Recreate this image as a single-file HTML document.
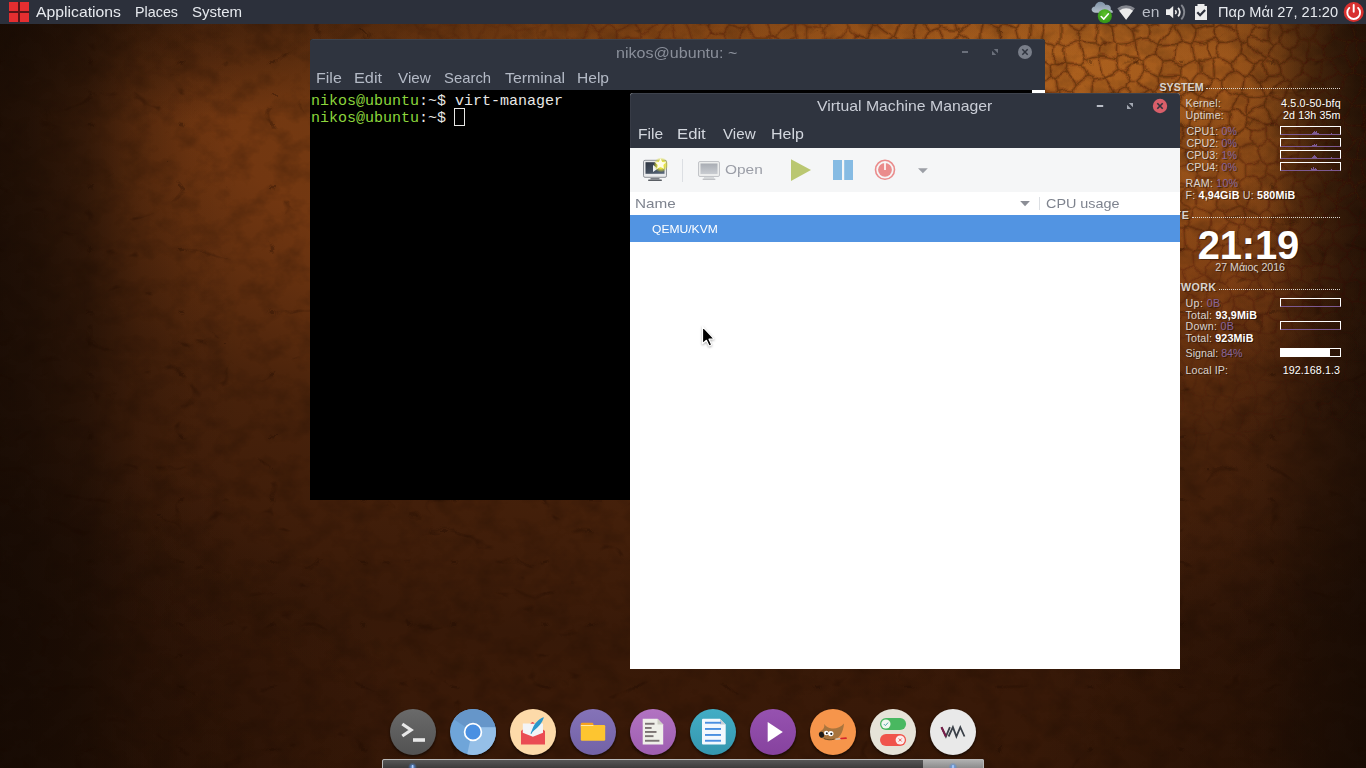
<!DOCTYPE html>
<html lang="en"><head><meta charset="utf-8"><title>Desktop</title>
<style>
html,body{margin:0;padding:0}
body{width:1366px;height:768px;overflow:hidden;position:relative;background:#3a1a08;font-family:"Liberation Sans",sans-serif}
.a{position:absolute}
.t{position:absolute;white-space:pre;line-height:20px;height:20px;transform-origin:0 0}
#wall{position:absolute;left:0;top:0;width:1366px;height:768px;
background:
 linear-gradient(to right, rgba(20,10,4,.82) 0px, rgba(20,10,4,.77) 30px, rgba(20,10,4,.59) 85px, rgba(20,10,4,.22) 140px, rgba(20,10,4,.06) 190px, rgba(20,10,4,0) 240px),
 radial-gradient(ellipse 125px 420px at 1376px 60px, rgba(20,10,4,.5) 0%, rgba(20,10,4,.4) 28%, rgba(20,10,4,.2) 58%, rgba(20,10,4,.05) 84%, rgba(20,10,4,0) 100%),
 linear-gradient(to left, rgba(20,10,4,.7) 0px, rgba(20,10,4,.66) 10px, rgba(20,10,4,.41) 60px, rgba(20,10,4,.12) 100px, rgba(20,10,4,0) 140px),
 radial-gradient(ellipse 430px 112px at 120px 10px, rgba(20,10,4,.45) 0%, rgba(20,10,4,.3) 50%, rgba(20,10,4,0) 100%),
 linear-gradient(to bottom, rgba(20,10,4,.1) 24px, rgba(20,10,4,0) 60px),
 radial-gradient(ellipse 420px 330px at 0px 768px, rgba(12,5,1,.3) 0%, rgba(12,5,1,.3) 45%, rgba(12,5,1,0) 100%),
 radial-gradient(ellipse 330px 300px at 1366px 768px, rgba(12,5,1,.4) 0%, rgba(12,5,1,.25) 50%, rgba(12,5,1,0) 100%),
 radial-gradient(ellipse 900px 520px at 640px 330px, rgba(12,5,1,0) 0%, rgba(12,5,1,0) 62%, rgba(12,5,1,.1) 100%),
 radial-gradient(ellipse 590px 360px at 1095px 20px, rgba(214,124,40,.66) 0%, rgba(205,116,36,.46) 38%, rgba(190,105,32,.2) 70%, rgba(180,100,30,0) 100%),
 radial-gradient(ellipse 1500px 640px at 840px 60px, #7e4214 0%, #763d12 19%, #723711 43%, #48220b 64%, #3d1c09 84%, #371908 92%, #3a1a08 100%);
}
#panel{left:0;top:0;width:1366px;height:24px;background:#2c303b}
.gb{position:absolute;box-sizing:border-box;border:1px solid #fff;border-bottom-color:#7d5a92;height:9px;left:1280px;width:61px}
.dots{position:absolute;height:0;border-top:1px dotted #d8d4cf}
</style></head><body>
<div id="wall"></div>

<svg class="a" style="left:0;top:0" width="1366" height="768">
<defs>
<filter id="lea" x="0" y="0" width="100%" height="100%" color-interpolation-filters="sRGB">
 <feTurbulence type="fractalNoise" baseFrequency=".04 .05" numOctaves="4" seed="7" result="n"/>
 <feColorMatrix in="n" type="matrix" values="0 0 0 0 .08  0 0 0 0 .03  0 0 0 0 0  1.7 0 0 0 -.720"/>
</filter>
<filter id="crk" x="0" y="0" width="100%" height="100%" color-interpolation-filters="sRGB">
 <feTurbulence type="turbulence" baseFrequency=".05 .06" numOctaves="2" seed="11" result="t"/>
 <feColorMatrix in="t" type="matrix" values="0 0 0 0 .200  0 0 0 0 .070  0 0 0 0 0  -7 0 0 0 1.25"/>
</filter>
<filter id="wr" x="0" y="0" width="100%" height="100%" color-interpolation-filters="sRGB">
 <feTurbulence type="turbulence" baseFrequency=".011 .016" numOctaves="3" seed="23" result="t"/>
 <feColorMatrix in="t" type="matrix" values="0 0 0 0 .100  0 0 0 0 .030  0 0 0 0 0  -16 0 0 0 1.3"/>
</filter>
<radialGradient id="crm" cx="1080" cy="40" r="440" gradientUnits="userSpaceOnUse" gradientTransform="translate(0 15) scale(1 .62)"><stop offset="0" stop-color="#fff"/><stop offset=".6" stop-color="#fff" stop-opacity=".75"/><stop offset="1" stop-color="#fff" stop-opacity="0"/></radialGradient>
<mask id="cm"><rect width="1366" height="768" fill="url(#crm)"/></mask>
</defs>
<rect width="1366" height="768" filter="url(#lea)" opacity=".3"/>
<rect width="1366" height="768" filter="url(#wr)" opacity=".28"/>
</svg><svg class="a" style="left:0;top:0" width="1366" height="480" viewBox="0 0 1366 480"><defs>
<path id="ck0" d="M1313 40Q1319 42 1325 46M1313 40Q1315 33 1318 27M1308 41Q1308 51 1307 61M1308 41Q1311 41 1313 40M1230 143Q1231 144 1232 142M1238 95Q1239 94 1241 94M1238 95Q1230 92 1223 89M1241 94Q1244 85 1244 77M1223 89Q1221 86 1222 82M1222 82Q1227 76 1233 70M1244 77Q1239 72 1233 70M1308 41Q1305 39 1301 39M1301 39Q1296 45 1290 49M1290 49Q1293 52 1292 56M1307 61Q1305 63 1303 65M1303 65Q1298 60 1292 56M1303 65Q1301 68 1302 72M948 44Q944 43 943 40M928 44Q935 42 943 40M1232 111Q1240 112 1248 115M1232 111Q1230 110 1229 112M1235 134Q1233 128 1229 124M1235 134Q1241 132 1245 128M1245 128Q1247 122 1248 116M1229 112Q1230 118 1229 124M1269 26Q1262 26 1255 27M1269 26Q1270 34 1269 41M1255 27Q1253 32 1252 37M1252 37Q1260 40 1269 41M1235 134Q1234 138 1232 142M1230 143Q1223 141 1216 139M1229 124Q1221 127 1213 130M1216 139Q1216 134 1213 130M1190 125Q1187 128 1183 128M1190 125Q1193 125 1195 127M1195 127Q1199 137 1200 148M1180 147Q1181 137 1183 128M1180 147Q1184 150 1188 152M1188 152Q1194 151 1200 148M1216 139Q1212 146 1206 150M1213 130Q1210 128 1209 126M1195 127Q1202 127 1209 126M1206 150Q1204 147 1200 148M1196 110Q1197 102 1199 95M1196 110Q1205 110 1214 114M1199 95Q1208 97 1215 101M1215 101Q1219 104 1218 109M1218 109Q1216 111 1214 114M1190 125Q1192 121 1191 116M1191 116Q1194 114 1196 110M1209 126Q1211 119 1214 114M1214 79Q1218 81 1222 82M1223 89Q1217 94 1215 101M1213 80Q1206 88 1199 95M1232 111Q1236 104 1238 95M1229 112Q1224 111 1218 109M1213 80Q1205 78 1200 73M1200 73Q1195 80 1191 86M1199 95Q1195 93 1191 90M1191 86Q1192 88 1191 90M1183 42Q1179 34 1174 27M1183 42Q1179 43 1177 46M1177 46Q1167 45 1157 46M1173 26Q1164 35 1157 46M1197 29Q1197 36 1194 41M1197 29Q1193 26 1191 20M1192 44Q1194 44 1194 41M1192 44Q1187 42 1183 42M1191 20Q1183 23 1174 27M1160 76Q1163 69 1163 62M1160 76Q1170 76 1180 75M1163 62Q1169 62 1174 61M1174 61Q1178 63 1181 66M1180 75Q1179 70 1181 66M1157 54Q1156 50 1157 46M1157 54Q1160 58 1163 62M1177 46Q1174 53 1174 61M1192 44Q1193 51 1195 59M1195 59Q1188 62 1181 66M1199 61Q1196 62 1195 59M1199 61Q1201 67 1200 73M1180 76Q1187 80 1191 86M1206 41Q1207 51 1211 59M1206 41Q1211 39 1216 38M1216 38Q1217 41 1220 42M1220 42Q1217 50 1218 58M1218 58Q1214 57 1212 59M1194 41Q1200 44 1206 41M1199 61Q1205 62 1211 59M1197 29Q1204 25 1213 25M1213 25Q1214 26 1215 27M1215 27Q1215 32 1216 38M1220 25Q1218 27 1215 27M1220 25Q1228 26 1235 30M1237 40Q1235 35 1235 30M1237 40Q1229 43 1220 42M1242 43Q1239 43 1237 40M1242 43Q1241 47 1240 52M1240 52Q1238 59 1231 65M1231 65Q1224 62 1218 58M1214 79Q1215 69 1212 59M1231 65Q1232 68 1233 70M1210 10Q1211 17 1213 25M1220 25Q1226 20 1230 14M1235 30Q1235 23 1239 17M1242 43Q1245 42 1247 41M1252 22Q1252 25 1255 27M1247 41Q1248 38 1252 37M894 37Q884 32 877 25M894 37Q898 29 900 19M877 25Q883 17 890 9M1275 20Q1280 25 1283 31M1283 31Q1290 30 1297 30M1297 30Q1298 26 1299 22M1269 26Q1271 22 1275 20M1279 44Q1281 38 1283 31M1279 44Q1276 45 1274 46M1274 46Q1271 44 1269 41M1301 39Q1299 35 1297 30M1290 49Q1284 48 1279 44M1318 27Q1310 24 1305 17M1241 94Q1244 96 1248 97M1248 97Q1249 106 1248 115M1292 56Q1286 62 1279 66M1274 46Q1269 51 1269 57M1279 66Q1275 60 1269 57M1247 41Q1255 51 1265 58M1269 57Q1266 55 1265 58M1245 128Q1249 129 1251 132M1248 116Q1257 121 1267 125M1081 8Q1083 17 1086 25M1086 25Q1092 23 1098 24M1098 24Q1099 22 1101 23M1158 24Q1153 24 1150 27M1150 27Q1147 25 1145 21M1173 26Q1173 23 1170 22M1157 46Q1154 41 1149 38M1150 27Q1150 32 1149 38M1121 20Q1126 25 1131 30M1121 20Q1118 25 1112 27M1112 27Q1113 34 1114 41M1134 41Q1135 35 1131 30M1134 41Q1126 45 1118 44M1118 44Q1115 43 1114 41M1145 21Q1139 27 1131 30M1101 23Q1107 23 1112 27M1095 42Q1097 45 1100 47M1095 42Q1097 33 1098 24M1100 47Q1107 43 1114 41M1149 38Q1141 38 1134 41M1020 21Q1019 25 1016 28M1016 28Q1010 25 1003 25M1003 25Q1003 16 1007 8M1028 41Q1031 31 1030 20M1020 42Q1018 35 1016 28M999 28Q999 36 1000 44M999 28Q1000 25 1003 25M985 22Q993 25 999 28M983 23Q980 33 981 44M960 33Q967 38 972 45M960 32Q967 27 970 20M1183 128Q1178 125 1171 125M1118 57Q1117 57 1117 59M1118 57Q1127 55 1137 57M1117 59Q1116 64 1118 69M1137 57Q1138 57 1138 59M1138 59Q1132 67 1125 73M1118 69Q1121 72 1125 73M1098 56Q1100 51 1100 47M1099 56Q1108 56 1117 59M1118 44Q1117 50 1118 57M1134 41Q1137 49 1137 57M1104 77Q1112 75 1118 69M1104 77Q1100 67 1099 56M1157 54Q1149 56 1143 61M1143 61Q1140 61 1138 59M1178 103Q1180 100 1181 97M1168 108Q1166 98 1164 88M1181 97Q1175 93 1170 89M1164 88Q1167 88 1170 89M1191 116Q1186 109 1178 103M1191 90Q1186 93 1181 97M1180 76Q1174 82 1170 89M1147 91Q1150 90 1151 92M1147 91Q1141 86 1137 79M1151 92Q1156 90 1159 85M1144 71Q1141 76 1137 79M1144 71Q1152 75 1159 77M1159 77Q1160 81 1159 85M1135 97Q1142 94 1147 91M1153 105Q1154 98 1151 92M1126 87Q1132 91 1135 97M1126 87Q1126 83 1129 79M1129 79Q1133 81 1137 79M1164 88Q1162 87 1159 85M1129 79Q1128 76 1125 73M1143 61Q1143 66 1144 71M1248 115Q1255 108 1265 105M1265 105Q1269 113 1273 121M1248 97Q1256 98 1264 95M1265 105Q1267 101 1266 96M1264 95Q1264 97 1266 96M1302 72Q1297 77 1291 81M1291 81Q1288 79 1284 79M1279 66Q1282 70 1280 75M1284 79Q1283 76 1280 75M1291 81Q1290 83 1292 84M1292 84Q1286 91 1282 100M1282 100Q1275 98 1268 96M1284 79Q1275 87 1268 96M1288 108Q1286 103 1282 100M1292 84Q1296 92 1302 97M894 37Q885 42 876 47M894 37Q897 39 899 42M877 25Q875 26 873 25M867 38Q869 31 873 25M867 38Q867 42 870 46M915 23Q915 31 914 39M919 20Q926 25 930 32M917 40Q915 40 914 39M925 41Q927 36 930 32M899 42Q906 40 914 39M943 40Q941 34 938 28M938 28Q934 29 930 32M1098 56Q1091 56 1085 59M1095 42Q1087 42 1078 41M1078 41Q1081 50 1085 59M1079 30Q1077 35 1078 41M1079 30Q1083 28 1086 25M1041 43Q1048 42 1055 45M1041 43Q1043 33 1045 24M1060 23Q1060 33 1060 44M1060 44Q1057 42 1055 45M957 29Q953 21 951 13M957 29Q948 30 940 26M940 26Q940 21 938 17M960 32Q960 29 957 29M948 44Q955 40 960 33M938 28Q940 28 940 26M1188 152Q1186 158 1188 164M1098 100Q1106 97 1114 93M1114 93Q1115 94 1116 94M1126 87Q1120 89 1116 94M1104 77Q1110 84 1114 93M1066 72Q1068 68 1068 64M1066 72Q1061 76 1056 79M1067 63Q1067 64 1068 64M1067 63Q1060 64 1053 63M1053 63Q1050 64 1048 66M1048 66Q1050 71 1051 75M1051 75Q1054 77 1056 79M1065 46Q1071 43 1078 41M1065 46Q1064 54 1067 63M1085 59Q1085 62 1082 64M1082 64Q1075 65 1068 64M1065 46Q1062 45 1060 44M1055 45Q1054 54 1053 63M1039 62Q1044 63 1048 66M1040 82Q1046 81 1051 75M867 38Q862 39 857 36M873 25Q871 21 867 18M1260 83Q1264 80 1267 76M1260 83Q1254 80 1249 76M1267 76Q1265 68 1262 61M1249 76Q1252 70 1257 64M1257 64Q1259 61 1262 61M1264 95Q1263 88 1260 83M1280 75Q1274 77 1267 76M1244 77Q1247 78 1249 76M1265 58Q1264 60 1262 61M1240 52Q1248 58 1257 64M1079 30Q1071 27 1065 21M1093 97Q1092 88 1095 80M1079 100Q1075 96 1073 90M1076 85Q1081 80 1088 77M1076 85Q1074 87 1073 90M1095 80Q1091 78 1088 77M1104 77Q1100 79 1095 80M1082 64Q1086 70 1088 77M1066 72Q1072 78 1076 85M1049 92Q1048 99 1045 105M1049 92Q1054 93 1058 91M1059 91Q1058 97 1059 104M1041 90Q1045 89 1049 92M1056 79Q1057 85 1058 91M1073 90Q1066 89 1059 91"/>
<path id="ck1" d="M1344 54Q1345 47 1348 41M1344 54Q1337 57 1329 60M1348 41Q1341 41 1334 38M1334 38Q1331 43 1325 46M1325 46Q1324 52 1326 59M1329 60Q1328 59 1326 59M1347 21Q1339 25 1331 25M1347 21Q1350 24 1353 26M1331 25Q1333 31 1334 38M1348 41Q1351 42 1353 39M1353 39Q1354 32 1353 26M1331 25Q1328 25 1327 22M1318 27Q1322 23 1327 22M1354 68Q1348 61 1344 54M1354 68Q1356 71 1354 73M1354 73Q1349 74 1344 77M1329 60Q1333 67 1338 74M1344 77Q1340 77 1338 74M1326 59Q1326 61 1324 60M1307 61Q1316 59 1324 60M1361 57Q1357 49 1356 40M1361 57Q1368 57 1375 57M1356 40Q1363 42 1371 40M1354 68Q1357 62 1361 57M1353 39Q1354 41 1356 40M1353 26Q1357 23 1360 20M1309 216Q1312 220 1312 224M1309 216Q1307 214 1304 213M1304 213Q1296 214 1290 216M1290 216Q1291 223 1290 230M1304 213Q1301 205 1300 197M1290 216Q1289 214 1287 214M1300 197Q1296 195 1292 192M1292 192Q1288 194 1284 197M1287 214Q1285 205 1284 197M1289 174Q1285 166 1278 161M1289 174Q1291 175 1293 176M1278 161Q1288 158 1297 157M1297 157Q1300 160 1300 164M1293 176Q1296 170 1300 164M1240 149Q1239 154 1240 158M1240 149Q1237 145 1232 142M1230 143Q1223 152 1218 163M1240 158Q1234 162 1227 166M1227 166Q1224 166 1221 166M1221 166Q1221 163 1218 163M1354 73Q1357 75 1361 77M1361 77Q1366 78 1370 75M1361 77Q1363 82 1362 87M1340 95Q1343 86 1344 77M1340 95Q1346 99 1351 103M1362 87Q1358 96 1351 103M1324 60Q1320 69 1318 80M1302 72Q1309 75 1314 80M1318 80Q1316 78 1314 80M1338 74Q1329 77 1321 82M1318 80Q1320 80 1321 82M1277 160Q1279 153 1279 147M1297 157Q1297 153 1299 149M1279 147Q1280 145 1281 145M1299 149Q1290 147 1281 145M1361 161Q1364 171 1367 180M1361 161Q1366 159 1371 157M1227 166Q1231 173 1235 179M1221 166Q1219 172 1217 179M1235 179Q1228 183 1220 186M1217 179Q1217 183 1220 186M1218 163Q1214 160 1210 160M1210 160Q1207 156 1206 150M1235 179Q1238 178 1240 181M1240 181Q1239 184 1240 188M1240 188Q1235 191 1231 195M1220 186Q1219 189 1219 193M1219 193Q1218 195 1220 195M1220 195Q1226 196 1231 195M1245 208Q1242 206 1239 206M1246 208Q1249 203 1251 198M1240 188Q1247 191 1251 198M1231 195Q1235 201 1239 206M728 45Q725 39 723 34M729 24Q726 29 723 34M729 24Q737 25 744 28M744 28Q741 35 738 43M1309 216Q1316 212 1318 205M1318 205Q1322 210 1326 215M1338 206Q1339 209 1336 211M1245 208Q1245 216 1242 223M1242 223Q1249 225 1255 229M1259 216Q1252 211 1246 208M1259 216Q1258 221 1260 227M1260 227Q1257 229 1255 229M1362 87Q1369 91 1373 97M1251 132Q1259 131 1266 128M1251 132Q1250 138 1253 144M1258 146Q1256 144 1253 144M1258 146Q1262 143 1267 140M1267 140Q1266 134 1266 128M1267 125Q1266 127 1266 128M1240 149Q1246 145 1253 144M1340 95Q1337 95 1333 97M1321 82Q1324 85 1324 89M1333 97Q1329 93 1324 89M1240 158Q1243 161 1246 164M1258 146Q1259 153 1262 160M1246 164Q1254 164 1262 160M1240 181Q1244 179 1246 176M1246 164Q1245 170 1246 176M1277 160Q1273 163 1268 164M1279 147Q1274 142 1267 140M1262 160Q1265 162 1268 164M1357 161Q1354 159 1351 160M1357 161Q1358 150 1362 139M1351 160Q1347 158 1344 156M1344 156Q1343 154 1344 153M1344 153Q1348 146 1353 142M1353 142Q1357 139 1362 139M1373 150Q1368 144 1365 138M1368 129Q1365 133 1365 138M1361 161Q1360 160 1357 161M1365 138Q1363 138 1362 139M1295 181Q1300 181 1304 180M1295 181Q1294 179 1293 176M1300 164Q1309 165 1317 166M1317 166Q1318 169 1316 173M1304 180Q1310 176 1316 173M1300 197Q1308 196 1317 195M1292 192Q1292 186 1295 181M1304 180Q1309 189 1317 195M1318 205Q1319 200 1322 196M1322 196Q1319 196 1317 195M1367 180Q1362 184 1355 186M1351 160Q1349 171 1348 181M1348 181Q1351 185 1355 186M1358 198Q1358 194 1355 191M1355 186Q1357 188 1355 191M1338 206Q1338 203 1336 202M1355 191Q1346 197 1336 202M1344 156Q1338 158 1333 163M1344 153Q1337 146 1332 138M1333 163Q1327 163 1321 162M1332 138Q1331 140 1328 140M1328 140Q1326 151 1321 162M1332 138Q1332 135 1333 132M1344 125Q1348 134 1353 142M1333 132Q1339 128 1344 124M1351 104Q1347 112 1344 120M1333 97Q1329 102 1326 108M1344 120Q1334 114 1326 108M1217 179Q1209 178 1201 178M1219 193Q1214 192 1208 191M1208 191Q1204 185 1201 178M1197 207Q1203 211 1211 212M1197 207Q1195 202 1197 198M1220 195Q1217 202 1217 209M1197 198Q1203 195 1208 191M1211 212Q1214 211 1217 209M1239 206Q1231 208 1225 213M1217 209Q1221 210 1225 213M1242 223Q1240 224 1238 225M1238 225Q1234 226 1231 223M1225 213Q1228 218 1231 223M749 49Q754 45 756 38M746 27Q751 33 756 38M729 24Q726 18 725 11M746 27Q749 25 749 22M756 38Q763 39 770 38M770 38Q770 47 767 55M1243 247Q1248 246 1250 241M1238 225Q1238 235 1236 244M1236 244Q1238 247 1243 247M1255 229Q1254 236 1250 241M1264 246Q1265 238 1266 229M1280 235Q1275 232 1271 229M1271 229Q1269 230 1266 229M1260 227Q1264 227 1266 229M1275 218Q1281 216 1287 214M1275 218Q1271 223 1271 229M1275 218Q1273 212 1267 209M1267 209Q1262 211 1259 216M1236 244Q1230 243 1224 245M1224 245Q1224 243 1222 244M1231 223Q1224 228 1217 234M1222 244Q1218 240 1217 234M1211 212Q1212 221 1210 229M1217 234Q1214 232 1210 229M1197 207Q1194 207 1193 209M1203 232Q1207 232 1210 229M1203 232Q1196 228 1188 226M1193 209Q1191 218 1188 226M1361 107Q1367 106 1371 104M1361 107Q1363 117 1366 127M1351 104Q1356 107 1361 107M1344 125Q1355 124 1366 127M1344 120Q1345 122 1344 124M1267 125Q1271 124 1273 121M1286 131Q1286 138 1281 145M1286 131Q1279 127 1275 121M1275 121Q1274 123 1273 121M1275 121Q1283 116 1288 108M1306 97Q1309 97 1312 99M1306 97Q1304 98 1302 97M1302 97Q1299 103 1296 108M1312 99Q1315 106 1321 110M1297 110Q1306 110 1315 115M1315 115Q1317 113 1320 113M1321 110Q1320 111 1320 113M1314 80Q1308 87 1306 97M1324 89Q1317 93 1312 99M1288 108Q1292 108 1296 108M1326 108Q1323 107 1321 110M1298 129Q1292 129 1286 131M1298 129Q1298 119 1297 110M1333 132Q1328 130 1325 125M1325 125Q1322 119 1320 113M1266 174Q1264 179 1259 180M1266 174Q1271 177 1275 181M1259 180Q1262 187 1260 194M1275 181Q1275 189 1280 196M1260 194Q1265 196 1269 199M1280 196Q1275 199 1269 199M1246 176Q1253 178 1259 180M1268 164Q1268 170 1266 174M1289 174Q1281 176 1275 181M1251 198Q1255 197 1260 194M1284 197Q1281 199 1280 196M1267 209Q1270 205 1269 199M1336 179Q1329 180 1324 186M1336 179Q1340 180 1345 182M1345 182Q1339 191 1335 201M1324 186Q1323 191 1322 196M1322 196Q1329 196 1335 201M1333 163Q1335 171 1336 179M1317 166Q1317 163 1320 163M1316 173Q1321 179 1324 186M1348 181Q1347 183 1345 182M1311 149Q1314 145 1316 141M1311 149Q1306 148 1300 148M1316 141Q1313 136 1310 131M1300 148Q1298 139 1299 129M1310 131Q1309 129 1306 129M1299 129Q1303 130 1306 129M1328 140Q1322 139 1316 141M1320 163Q1316 155 1311 149M1325 125Q1318 129 1310 131M1315 115Q1310 121 1306 129M1178 183Q1183 184 1189 185M1189 185Q1194 181 1197 176M1176 168Q1183 167 1188 164M1188 164Q1193 168 1197 173M1197 173Q1198 174 1197 176M1197 198Q1194 191 1189 185M1201 178Q1200 176 1197 176M1210 160Q1205 167 1197 173M766 22Q769 29 771 37M775 37Q773 37 771 37M775 37Q780 39 782 42M857 36Q852 32 848 27M857 36Q853 42 850 49M848 27Q843 35 837 41M816 46Q820 41 824 37M824 37Q830 41 837 41M723 34Q716 34 709 31M714 9Q712 19 708 27M1180 201Q1176 198 1171 200M1180 201Q1185 206 1191 209M1191 209Q1183 211 1175 213M1189 185Q1183 192 1180 201M1184 228Q1180 228 1176 227M1184 228Q1184 239 1186 249M1179 251Q1182 248 1186 249M1188 226Q1185 226 1184 228M1205 251Q1201 251 1197 250M1193 251Q1196 251 1197 250M1186 249Q1190 250 1193 251M1222 244Q1213 246 1205 251M1203 232Q1199 240 1197 250M775 37Q783 31 789 24M789 24Q792 26 795 24M782 42Q790 42 796 39M795 24Q795 32 796 39M796 39Q798 41 799 43M818 11Q819 19 818 28M818 28Q813 26 807 26M807 26Q804 22 799 22M824 37Q825 34 822 32M822 32Q822 28 818 28M807 42Q806 34 807 26M795 24Q797 24 799 22M848 27Q847 26 848 24M822 32Q826 25 833 20"/>
<path id="ck2" d="M1364 267Q1369 267 1373 270M1364 267Q1362 259 1362 251M1362 251Q1369 248 1375 247M1377 224Q1370 224 1363 226M1375 247Q1371 235 1363 226M1312 224Q1307 230 1301 235M1290 230Q1297 231 1301 235M1315 264Q1309 267 1302 269M1315 264Q1309 255 1301 248M1287 265Q1295 265 1302 269M1287 265Q1292 258 1296 251M1296 251Q1298 248 1301 248M1378 291Q1373 298 1365 303M1364 267Q1361 269 1357 269M1357 269Q1352 273 1350 279M1372 283Q1367 281 1362 284M1350 279Q1357 280 1362 284M1365 303Q1361 303 1358 301M1362 284Q1360 293 1358 301M1233 347Q1233 336 1232 325M1248 334Q1246 329 1243 325M1232 325Q1237 324 1243 325M1365 208Q1374 208 1382 210M1365 208Q1365 205 1364 203M1364 203Q1371 196 1378 190M1359 222Q1354 214 1346 207M1359 222Q1361 215 1365 208M1364 203Q1362 199 1358 198M1346 207Q1351 201 1358 198M580 41Q573 41 567 39M580 41Q584 34 589 26M587 22Q590 24 589 26M629 23Q625 28 618 30M618 30Q613 27 608 23M589 26Q594 30 600 32M608 23Q603 26 600 32M663 18Q652 28 640 34M635 24Q637 29 640 34M635 24Q640 17 645 8M640 39Q639 37 640 34M640 39Q642 41 642 43M642 43Q651 42 658 38M667 23Q663 30 658 38M640 39Q629 39 617 40M629 23Q632 22 635 24M618 30Q616 34 617 40M658 38Q662 39 663 42M672 24Q675 31 675 40M663 42Q669 40 675 40M1312 224Q1317 224 1321 227M1326 215Q1325 222 1321 227M1314 243Q1321 237 1324 229M1314 243Q1308 245 1302 243M1301 235Q1303 239 1302 243M1321 227Q1323 228 1324 229M1352 247Q1357 236 1360 225M1352 247Q1350 249 1347 250M1347 250Q1341 246 1335 242M1359 224Q1349 225 1339 227M1339 227Q1337 231 1333 233M1335 242Q1332 238 1333 233M1362 251Q1357 250 1352 247M1363 226Q1361 226 1360 225M1357 269Q1352 262 1346 256M1346 256Q1349 253 1347 250M1346 207Q1342 208 1338 206M1336 211Q1337 219 1339 227M1326 215Q1331 212 1336 211M1324 229Q1329 231 1333 233M1325 251Q1330 247 1335 242M1325 251Q1319 248 1314 243M1358 301Q1355 301 1353 302M1346 281Q1340 275 1337 267M1346 282Q1333 278 1319 277M1337 267Q1329 265 1320 265M1319 277Q1321 271 1320 265M1346 256Q1341 261 1337 267M1350 279Q1349 282 1346 281M1325 251Q1323 258 1320 265M1315 264Q1318 263 1320 265M1302 243Q1301 245 1301 248M1205 350Q1198 343 1193 334M1193 334Q1200 331 1206 326M1215 340Q1217 335 1215 330M1215 330Q1210 328 1206 326M1177 345Q1180 342 1180 338M1180 338Q1176 333 1173 327M1193 334Q1191 336 1190 334M1180 338Q1185 336 1190 334M1322 316Q1317 319 1313 324M1302 269Q1302 274 1301 279M1318 282Q1315 283 1313 284M1318 282Q1319 279 1319 277M1301 279Q1307 282 1313 284M1245 256Q1246 251 1243 247M1245 256Q1251 259 1257 258M1257 258Q1260 252 1264 246M1264 246Q1258 242 1250 241M1256 279Q1261 274 1267 269M1267 269Q1261 264 1257 258M1255 279Q1250 269 1243 261M1243 261Q1245 259 1245 256M1274 250Q1269 249 1264 246M1274 250Q1278 247 1280 243M1280 243Q1281 239 1280 235M1277 264Q1273 267 1268 269M1277 264Q1277 257 1274 250M1296 251Q1288 247 1280 243M1286 266Q1281 266 1277 264M1290 230Q1285 232 1280 235M1172 266Q1177 268 1183 270M1186 287Q1188 287 1187 285M1186 287Q1178 287 1169 285M1183 270Q1186 277 1187 285M709 31Q710 29 708 27M709 31Q707 37 702 40M708 27Q701 25 695 21M692 38Q690 30 686 23M692 38Q695 39 697 42M676 41Q684 38 692 38M1232 325Q1231 323 1229 323M1243 325Q1246 321 1249 316M1249 316Q1242 311 1235 306M1229 323Q1230 314 1235 306M1215 330Q1220 328 1222 323M1229 323Q1225 324 1222 323M1186 287Q1186 292 1189 295M1168 296Q1175 298 1181 302M1189 295Q1186 300 1181 302M1190 334Q1191 325 1189 317M1173 327Q1177 321 1181 315M1189 317Q1185 315 1181 315M1323 313Q1319 310 1319 305M1323 313Q1329 312 1336 312M1319 305Q1322 299 1325 292M1336 312Q1340 305 1344 297M1325 292Q1334 292 1342 294M1344 297Q1341 296 1342 294M1322 316Q1322 314 1323 313M1353 302Q1349 299 1344 297M1318 282Q1323 286 1325 292M1346 282Q1342 287 1342 294M1313 324Q1305 321 1299 317M1319 305Q1312 302 1304 302M1299 317Q1303 310 1304 302M1292 328Q1290 325 1291 321M1299 317Q1295 319 1291 321M1313 284Q1307 290 1301 297M1304 302Q1303 300 1301 297M1289 279Q1282 282 1275 283M1289 279Q1292 280 1292 284M1292 284Q1292 288 1292 293M1292 293Q1288 297 1283 298M1283 298Q1279 297 1275 297M1275 283Q1274 290 1274 296M1286 266Q1288 272 1289 279M1268 269Q1271 277 1275 283M1301 279Q1296 281 1292 284M1301 297Q1297 294 1292 293M1289 320Q1290 320 1291 321M1289 320Q1288 308 1283 298M1267 315Q1271 319 1277 320M1267 315Q1270 306 1275 297M1277 320Q1283 319 1289 320M1256 279Q1260 286 1264 293M1264 293Q1269 295 1274 296M1261 316Q1264 316 1267 315M1261 316Q1258 317 1256 314M1264 293Q1260 298 1254 301M1256 314Q1253 308 1254 301M1277 320Q1276 327 1274 333M1261 316Q1262 325 1260 333M1248 334Q1254 332 1259 334M1249 316Q1253 315 1256 314M1224 245Q1222 252 1223 260M1243 261Q1240 262 1238 265M1224 262Q1231 264 1238 265M1204 274Q1205 267 1210 261M1203 274Q1197 271 1194 265M1194 265Q1193 258 1193 251M1210 261Q1207 256 1205 251M1212 281Q1208 278 1204 274M1212 281Q1215 282 1218 280M1223 260Q1216 260 1210 261M1224 262Q1222 271 1218 280M1183 270Q1189 269 1194 265M1187 285Q1194 278 1203 274M602 38Q606 43 612 46M602 38Q596 44 588 47M600 32Q601 35 602 38M617 40Q613 42 612 46M1181 302Q1178 307 1178 312M1181 315Q1179 314 1178 312M1222 303Q1220 309 1218 314M1222 303Q1213 299 1204 299M1218 314Q1209 311 1200 311M1204 299Q1201 300 1201 301M1201 301Q1199 306 1200 310M1206 326Q1204 318 1200 311M1222 323Q1219 319 1218 314M1212 281Q1210 291 1204 299M1189 295Q1194 299 1201 301M1189 317Q1195 315 1200 310M1225 284Q1230 278 1236 275M1225 284Q1227 291 1232 297M1236 275Q1244 277 1250 281M1250 281Q1248 289 1242 295M1242 295Q1237 295 1233 298M1238 265Q1239 270 1236 275M1218 280Q1222 280 1225 284M1222 303Q1228 302 1232 297M1255 279Q1252 279 1250 281M1254 301Q1247 299 1242 295M1235 306Q1236 301 1233 298"/>
<path id="ck3" d="M1370 412Q1367 415 1363 415M550 21Q553 30 554 39M554 39Q560 40 566 38M566 38Q567 31 566 23M554 39Q547 41 540 43M538 27Q538 35 540 43M546 20Q542 22 538 26M1367 309Q1365 306 1365 303M1242 343Q1238 346 1233 347M1242 343Q1244 338 1248 334M1324 421Q1328 418 1333 419M1333 419Q1338 420 1342 423M1363 415Q1356 412 1350 409M1350 409Q1345 415 1342 422M1371 405Q1366 399 1358 395M1358 395Q1354 399 1350 403M1350 409Q1348 406 1350 403M1348 361Q1355 363 1362 363M1348 361Q1344 369 1344 378M1344 378Q1352 382 1360 386M1368 369Q1367 365 1362 363M1367 381Q1362 382 1360 386M1365 346Q1361 347 1358 345M1365 346Q1362 355 1362 363M1358 345Q1353 351 1346 354M1346 354Q1345 356 1346 359M1346 359Q1348 359 1348 361M1369 344Q1368 347 1365 346M1358 395Q1358 390 1360 386M411 20Q417 24 421 30M422 29Q427 19 431 9M567 39Q565 48 563 56M1249 382Q1252 382 1255 385M1249 382Q1248 372 1248 362M1248 362Q1251 360 1254 359M1255 385Q1256 382 1259 381M1259 381Q1263 376 1265 370M1254 359Q1259 364 1265 370M1352 316Q1355 320 1360 322M1352 316Q1346 316 1342 320M1342 320Q1343 327 1341 333M1361 326Q1357 331 1351 334M1361 326Q1360 324 1360 322M1351 334Q1346 334 1341 333M1367 309Q1365 316 1360 322M1353 302Q1354 309 1352 316M1374 332Q1368 328 1361 326M1358 345Q1353 340 1351 334M1346 354Q1341 349 1338 342M1338 342Q1337 338 1338 335M1338 335Q1338 333 1341 333M1280 367Q1283 374 1285 381M1280 367Q1279 364 1277 365M1259 381Q1270 382 1281 383M1281 383Q1284 384 1285 381M1277 365Q1271 369 1265 370M538 26Q533 18 526 12M1186 448Q1179 441 1174 432M1182 410Q1177 414 1172 419M1182 410Q1191 413 1201 416M1175 429Q1184 429 1193 429M1193 429Q1196 422 1201 416M1219 367Q1227 366 1235 364M1219 367Q1220 363 1217 360M1217 360Q1224 355 1232 351M1232 351Q1235 355 1237 360M1237 360Q1234 361 1235 364M1220 376Q1226 376 1233 376M1220 376Q1221 371 1219 367M1233 376Q1233 370 1235 364M1242 343Q1250 347 1257 352M1248 362Q1242 361 1237 360M1257 352Q1257 356 1254 359M1233 347Q1234 349 1232 351M1249 382Q1245 381 1240 383M1240 383Q1236 381 1233 376M1210 357Q1207 354 1205 350M1210 357Q1207 367 1202 375M1205 350Q1199 351 1195 355M1195 355Q1192 361 1190 368M1190 368Q1195 371 1198 375M1202 375Q1200 376 1198 375M1220 376Q1219 378 1218 378M1212 379Q1214 377 1218 378M1212 379Q1206 377 1202 375M1217 360Q1214 358 1210 357M1192 391Q1194 383 1198 375M1192 391Q1196 394 1201 397M1212 379Q1207 386 1206 394M1201 397Q1203 396 1206 394M1182 396Q1176 394 1169 393M1182 396Q1185 393 1189 392M1189 392Q1183 384 1179 376M1192 391Q1190 392 1189 392M1190 368Q1189 369 1187 368M1179 376Q1183 372 1187 368M1177 345Q1186 349 1195 355M1187 368Q1180 362 1173 356M1205 350Q1210 345 1215 340M1233 347Q1224 344 1215 340M1315 337Q1324 335 1332 333M1315 337Q1314 337 1313 336M1332 333Q1327 325 1322 316M1313 336Q1312 330 1313 324M1333 419Q1334 411 1331 402M1350 403Q1343 400 1335 397M1331 402Q1332 399 1335 397M1341 380Q1339 388 1335 395M1340 379Q1328 382 1317 385M1317 385Q1327 389 1335 395M1341 380Q1342 378 1344 378M1335 395Q1335 396 1335 397M1299 343Q1299 341 1300 339M1299 343Q1303 351 1307 359M1315 337Q1318 340 1317 344M1313 336Q1306 335 1300 339M1307 359Q1313 352 1317 344M1338 342Q1333 347 1326 351M1338 335Q1336 332 1332 333M1317 344Q1323 346 1326 351M1346 359Q1336 360 1326 362M1326 351Q1327 357 1326 362M1340 379Q1330 374 1323 366M1326 362Q1324 364 1323 366M421 30Q420 36 417 41M455 24Q453 30 455 36M455 24Q448 24 442 25M455 36Q448 40 442 43M442 43Q440 37 437 31M437 31Q439 28 442 25M467 24Q470 32 472 40M465 44Q461 39 455 36M434 8Q439 17 442 25M422 29Q430 29 437 31M538 27Q527 30 515 32M515 32Q514 36 517 39M525 45Q522 41 517 39M515 32Q514 27 510 25M510 25Q516 19 519 11M1255 385Q1257 389 1258 395M1281 383Q1274 390 1269 398M1258 395Q1264 396 1269 398M1279 416Q1284 408 1292 402M1279 416Q1276 417 1275 418M1290 401Q1282 403 1273 403M1275 418Q1272 417 1272 414M1272 414Q1273 408 1273 403M1290 401Q1289 391 1285 381M1273 403Q1272 399 1269 398M1193 429Q1196 430 1195 434M1194 448Q1195 441 1195 434M1182 410Q1182 403 1182 396M1201 397Q1200 406 1203 414M1211 435Q1203 433 1195 434M1211 435Q1213 433 1214 430M1202 415Q1208 423 1214 430M1342 320Q1340 316 1336 312M1300 339Q1297 333 1292 328M1274 333Q1275 338 1279 340M1274 333Q1267 332 1260 333M1272 351Q1267 352 1262 349M1272 351Q1277 349 1279 344M1279 344Q1281 342 1279 340M1262 349Q1259 342 1259 334M1292 328Q1285 333 1279 340M1257 352Q1259 350 1262 349M1277 365Q1275 357 1272 351M1290 348Q1284 348 1279 344M1290 348Q1292 354 1291 360M1291 360Q1285 362 1280 367M1299 343Q1293 344 1290 348M1321 419Q1313 420 1305 417M1321 419Q1320 411 1319 404M1319 404Q1315 400 1309 399M1309 399Q1303 401 1300 406M1305 417Q1301 414 1300 409M1300 409Q1302 407 1300 406M1324 421Q1322 421 1321 419M1305 434Q1305 425 1305 417M1331 402Q1324 402 1319 404M1289 430Q1289 424 1292 418M1292 418Q1297 414 1300 409M1292 418Q1285 416 1279 416M1292 402Q1296 403 1300 406M1311 388Q1313 385 1316 385M1311 388Q1305 382 1296 379M1316 385Q1318 377 1320 368M1296 379Q1300 371 1304 363M1320 368Q1312 366 1307 361M1304 363Q1305 361 1307 361M1309 399Q1312 394 1311 388M1285 381Q1291 382 1296 379M1323 366Q1322 369 1320 368M1291 360Q1298 360 1304 363M1307 359Q1306 360 1307 361M517 39Q512 44 508 49M1211 435Q1208 443 1208 451M1233 436Q1228 433 1223 430M1223 430Q1219 430 1214 430M1225 412Q1219 412 1213 411M1225 412Q1227 408 1232 407M1213 411Q1215 404 1216 396M1232 407Q1231 404 1232 402M1232 402Q1230 400 1231 398M1231 398Q1227 395 1222 394M1222 394Q1220 396 1216 396M1203 414Q1208 413 1213 411M1223 430Q1222 421 1225 412M1206 394Q1211 397 1216 396M1240 383Q1237 391 1231 398M1258 395Q1256 395 1257 397M1257 397Q1244 398 1232 402M1218 378Q1219 387 1222 394M1260 430Q1250 431 1239 433M1260 430Q1255 422 1253 414M1243 416Q1248 413 1253 413M1243 416Q1241 424 1238 433M1257 397Q1256 406 1253 413M1232 407Q1237 413 1243 416M1233 436Q1235 434 1238 433M1256 446Q1247 440 1239 433M1272 414Q1262 414 1253 414M1262 431Q1269 432 1275 428M1280 433Q1278 430 1275 428M1260 430Q1262 429 1262 431M1289 430Q1285 432 1280 433M1275 418Q1275 423 1275 428M477 17Q482 21 486 26M495 7Q498 16 501 25M486 26Q492 28 498 27M501 25Q499 25 498 27M475 40Q480 33 486 26M510 25Q506 24 501 25M495 42Q495 34 498 27"/>
<filter id="wob" x="0" y="0" width="100%" height="100%"><feTurbulence type="fractalNoise" baseFrequency=".07" numOctaves="2" seed="3"/><feDisplacementMap in="SourceGraphic" scale="7" xChannelSelector="R" yChannelSelector="G"/></filter>
</defs><g fill="none" stroke="#3d1602" stroke-linecap="round" filter="url(#wob)">
<use href="#ck0" stroke-width="4" opacity="0.15"/><use href="#ck0" stroke-width="1.3" opacity="0.4"/>
<use href="#ck1" stroke-width="4" opacity="0.11"/><use href="#ck1" stroke-width="1.3" opacity="0.28"/>
<use href="#ck2" stroke-width="4" opacity="0.07"/><use href="#ck2" stroke-width="1.3" opacity="0.17"/>
<use href="#ck3" stroke-width="4" opacity="0.03"/><use href="#ck3" stroke-width="1.3" opacity="0.08"/>
</g></svg>
<div id="conky">
<span class="t" id="c_system" style="left:1159.40px;top:76.59px;font-size:10.70px;color:#d8d4cf;font-weight:700;letter-spacing:0.060px;text-shadow:1px 1px 0 rgba(0,0,0,.42);">SYSTEM</span>
<span class="t" id="c_kernel" style="left:1185.50px;top:93.39px;font-size:10.70px;color:#d8d4cf;letter-spacing:0.250px;text-shadow:1px 1px 0 rgba(0,0,0,.42);">Kernel:</span>
<span class="t" id="c_kver" style="left:1281.00px;top:93.39px;font-size:10.70px;color:#ffffff;letter-spacing:0.182px;text-shadow:1px 1px 0 rgba(0,0,0,.42);">4.5.0-50-bfq</span>
<span class="t" id="c_uptime" style="left:1185.50px;top:105.39px;font-size:10.70px;color:#d8d4cf;letter-spacing:0.250px;text-shadow:1px 1px 0 rgba(0,0,0,.42);">Uptime:</span>
<span class="t" id="c_upv" style="left:1283.00px;top:105.39px;font-size:10.70px;color:#ffffff;letter-spacing:0.111px;text-shadow:1px 1px 0 rgba(0,0,0,.42);">2d 13h 35m</span>
<span class="t" id="c_cpu0" style="left:1186.50px;top:120.99px;font-size:10.70px;color:#d8d4cf;letter-spacing:0.071px;text-shadow:1px 1px 0 rgba(0,0,0,.42);">CPU1: <span style="color:#86659c">0%</span></span>
<span class="t" id="c_cpu1" style="left:1186.50px;top:132.99px;font-size:10.70px;color:#d8d4cf;letter-spacing:0.071px;text-shadow:1px 1px 0 rgba(0,0,0,.42);">CPU2: <span style="color:#86659c">0%</span></span>
<span class="t" id="c_cpu2" style="left:1186.50px;top:144.99px;font-size:10.70px;color:#d8d4cf;letter-spacing:0.071px;text-shadow:1px 1px 0 rgba(0,0,0,.42);">CPU3: <span style="color:#86659c">1%</span></span>
<span class="t" id="c_cpu3" style="left:1186.50px;top:156.99px;font-size:10.70px;color:#d8d4cf;letter-spacing:0.071px;text-shadow:1px 1px 0 rgba(0,0,0,.42);">CPU4: <span style="color:#86659c">0%</span></span>
<span class="t" id="c_ram" style="left:1185.50px;top:173.09px;font-size:10.70px;color:#d8d4cf;letter-spacing:0.214px;text-shadow:1px 1px 0 rgba(0,0,0,.42);">RAM: <span style="color:#86659c">10%</span></span>
<span class="t" id="c_f" style="left:1185.50px;top:185.09px;font-size:10.70px;color:#d8d4cf;letter-spacing:0.184px;text-shadow:1px 1px 0 rgba(0,0,0,.42);">F: <b style="color:#fff">4,94GiB</b> U: <b style="color:#fff">580MiB</b></span>
<span class="t" id="c_date" style="left:1158.40px;top:204.89px;font-size:10.70px;color:#d8d4cf;font-weight:700;letter-spacing:0.700px;text-shadow:1px 1px 0 rgba(0,0,0,.42);">DATE</span>
<span class="t" id="c_time" style="left:1197.80px;top:235.04px;font-size:40.00px;color:#ffffff;font-weight:700;letter-spacing:-0.225px;text-shadow:1px 1px 0 rgba(0,0,0,.35);">21:19</span>
<span class="t" id="c_day" style="left:1215.30px;top:256.99px;font-size:10.70px;color:#d8d4cf;letter-spacing:-0.033px;text-shadow:1px 1px 0 rgba(0,0,0,.42);">27 Μάιος 2016</span>
<span class="t" id="c_net" style="left:1158.40px;top:276.99px;font-size:10.70px;color:#d8d4cf;font-weight:700;letter-spacing:0.400px;text-shadow:1px 1px 0 rgba(0,0,0,.42);">NETWORK</span>
<span class="t" id="c_up" style="left:1185.50px;top:292.79px;font-size:10.70px;color:#d8d4cf;letter-spacing:0.400px;text-shadow:1px 1px 0 rgba(0,0,0,.42);">Up: <span style="color:#86659c">0B</span></span>
<span class="t" id="c_tot1" style="left:1185.60px;top:305.49px;font-size:10.70px;color:#d8d4cf;letter-spacing:0.185px;text-shadow:1px 1px 0 rgba(0,0,0,.42);">Total: <b style="color:#fff">93,9MiB</b></span>
<span class="t" id="c_down" style="left:1185.50px;top:316.29px;font-size:10.70px;color:#d8d4cf;letter-spacing:0.286px;text-shadow:1px 1px 0 rgba(0,0,0,.42);">Down: <span style="color:#86659c">0B</span></span>
<span class="t" id="c_tot2" style="left:1185.60px;top:327.89px;font-size:10.70px;color:#d8d4cf;letter-spacing:0.158px;text-shadow:1px 1px 0 rgba(0,0,0,.42);">Total: <b style="color:#fff">923MiB</b></span>
<span class="t" id="c_sig" style="left:1185.50px;top:343.29px;font-size:10.70px;color:#d8d4cf;text-shadow:1px 1px 0 rgba(0,0,0,.42);">Signal: <span style="color:#86659c">84%</span></span>
<span class="t" id="c_ip" style="left:1185.50px;top:360.09px;font-size:10.70px;color:#d8d4cf;letter-spacing:0.125px;text-shadow:1px 1px 0 rgba(0,0,0,.42);">Local IP:</span>
<span class="t" id="c_ipv" style="left:1282.70px;top:360.09px;font-size:10.70px;color:#ffffff;letter-spacing:0.080px;text-shadow:1px 1px 0 rgba(0,0,0,.42);">192.168.1.3</span>
<div class="dots" style="left:1206px;top:88px;width:134px"></div>
<div class="dots" style="left:1192px;top:217px;width:148px"></div>
<div class="dots" style="left:1219px;top:289px;width:121px"></div>
<div class="gb" style="top:126px"></div>
<div class="gb" style="top:138px"></div>
<div class="gb" style="top:150px"></div>
<div class="gb" style="top:162px"></div>
<div class="gb" style="top:298px"></div><div class="gb" style="top:321px"></div>
<div class="gb" style="top:348px;border-bottom-color:#fff"><div class="a" style="left:0;top:0;width:49px;height:7px;background:#fff"></div></div>
<svg class="a" style="left:1280px;top:126px" width="61" height="46" viewBox="1280 126 61 46">
<path d="M1312 134v-1h1v-1h1v-1h1v1h1v-1h1v2h2v1zM1331 134v-1h1v1z" fill="#7d5a92"/>
<path d="M1312 146v-1h2v-1h1v1h1v-1h1v2zM1331 146z" fill="#7d5a92"/>
<path d="M1312 158v-1h1v-1h1v-1h1v1h1v1h1v1zM1331 158v-1h1v1z" fill="#7d5a92"/>
<path d="M1311 170v-2h1v1h1v-2h1v2h1v-1h1v1h1v1zM1331 170v-1h1v1z" fill="#7d5a92"/>
</svg>
</div>
<div id="panel" class="a">
<div class="a" style="left:9px;top:2px;width:9px;height:9px;background:#e42e30"></div>
<div class="a" style="left:20px;top:2px;width:9px;height:9px;background:#e42e30"></div>
<div class="a" style="left:9px;top:13px;width:9px;height:9px;background:#e42e30"></div>
<div class="a" style="left:20px;top:13px;width:9px;height:9px;background:#e42e30"></div>
<div class="a" style="left:18px;top:2px;width:2px;height:20px;background:#5a1518"></div><div class="a" style="left:9px;top:11px;width:20px;height:2px;background:#5a1518"></div>
<span class="t" id="p_app" style="left:36.40px;top:1.85px;font-size:14.30px;color:#e6e9ee;transform:scaleX(1.1013);">Applications</span>
<span class="t" id="p_pla" style="left:135.40px;top:1.85px;font-size:14.30px;color:#e6e9ee;transform:scaleX(1.0024);">Places</span>
<span class="t" id="p_sys" style="left:191.95px;top:1.85px;font-size:14.30px;color:#e6e9ee;transform:scaleX(1.0522);">System</span>
<span class="t" id="p_en" style="left:1141.61px;top:1.75px;font-size:14.30px;color:#b9bdc6;transform:scaleX(1.0929);">en</span>
<span class="t" id="p_date" style="left:1217.58px;top:1.95px;font-size:14.30px;color:#e6e9ee;transform:scaleX(1.0207);">Παρ Μάι 27, 21:20</span>

<svg class="a" style="left:1088px;top:0" width="278" height="24" viewBox="1088 0 278 24">
 <defs>
  <linearGradient id="cl" x1="0" y1="0" x2="0" y2="1"><stop offset="0" stop-color="#7f92a6"/><stop offset="1" stop-color="#b4bfca"/></linearGradient>
  <radialGradient id="gc" cx=".5" cy=".35" r=".7"><stop offset="0" stop-color="#5cc22a"/><stop offset="1" stop-color="#2f8f14"/></radialGradient>
 </defs>
 <!-- cloud -->
 <path d="M1095.6 12.8c-2.3 0-4-1.4-4-3.2 0-1.7 1.4-3 3.3-3.1.4-2.7 2.6-4.8 5.5-4.8 2.3 0 4.3 1.3 5.1 3.3.4-.1.9-.2 1.4-.2 2.2 0 3.9 1.5 3.9 3.4 0 .5-.1.9-.3 1.3 1.3.4 2.3 1.4 2.3 2.6 0 .3-.1.5-.2.7z" fill="url(#cl)"/>
 <circle cx="1104.8" cy="16.3" r="7" fill="url(#gc)"/>
 <path d="M1101.2 16.5l2.6 2.6 4.6-5.3" fill="none" stroke="#fff" stroke-width="1.6" stroke-linecap="round" stroke-linejoin="round"/>
 <!-- wifi -->
 <path d="M1126.1 19.8L1117.3 8.3A14.4 14.4 0 0 1 1134.9 8.3Z" fill="#83868e"/>
 <path d="M1126.1 19.8L1119.2 10.7A11.4 11.4 0 0 1 1133 10.7Z" fill="#ececec"/>
 <!-- volume -->
 <path d="M1166 9.3h3.5l3.7-3.4v12.4l-3.7-3.4H1166z" fill="#ececec"/>
 <path d="M1175.3 10.2a2.8 2.8 0 0 1 0 3.8" fill="none" stroke="#ececec" stroke-width="1.5"/>
 <path d="M1178.1 7.9a6 6 0 0 1 0 8.4" fill="none" stroke="#ececec" stroke-width="1.8"/>
 <path d="M1181.3 4.9a10.3 10.3 0 0 1 0 14.4" fill="none" stroke="#83868e" stroke-width="1.9"/>
 <!-- clipboard -->
 <path d="M1195 6h2.5V4h7V6h2.5v14h-12z" fill="#ececec"/>
 <path d="M1197.3 12.3l2.8 2.9 5-5.3" fill="none" stroke="#2c303b" stroke-width="2.2"/>
 <!-- power -->
 <circle cx="1353.7" cy="12" r="10" fill="#d8302f"/>
 <path d="M1349.3 7.9a6.4 6.4 0 1 0 8.8 0" fill="none" stroke="#fff" stroke-width="1.9" stroke-linecap="round"/>
 <path d="M1353.7 5v6.8" stroke="#fff" stroke-width="1.9" stroke-linecap="round"/>
</svg>
</div>
<div id="term" class="a" style="left:310px;top:39px;width:735px;height:461px;background:#000;border-radius:3px 3px 0 0">
<div class="a" style="left:0;top:0;width:735px;height:51px;background:#2f343f;border-radius:3px 3px 0 0;box-shadow:inset 0 1px 0 rgba(255,255,255,.07)"></div>
<div class="a" style="left:722px;top:51px;width:13px;height:410px;background:#fff"></div>
</div>
<span class="t" id="t_title" style="left:616.38px;top:43.05px;font-size:14.30px;color:#8a8f9a;transform:scaleX(1.1245);">nikos@ubuntu: ~</span>
<span class="t" id="t_m0" style="left:316.38px;top:68.25px;font-size:14.30px;color:#b4bac6;transform:scaleX(1.1190);">File</span>
<span class="t" id="t_m1" style="left:354.36px;top:68.25px;font-size:14.30px;color:#b4bac6;transform:scaleX(1.1375);">Edit</span>
<span class="t" id="t_m2" style="left:397.60px;top:68.25px;font-size:14.30px;color:#b4bac6;transform:scaleX(1.0645);">View</span>
<span class="t" id="t_m3" style="left:444.46px;top:68.25px;font-size:14.30px;color:#b4bac6;transform:scaleX(1.0395);">Search</span>
<span class="t" id="t_m4" style="left:505.40px;top:68.25px;font-size:14.30px;color:#b4bac6;transform:scaleX(1.1113);">Terminal</span>
<span class="t" id="t_m5" style="left:577.41px;top:68.25px;font-size:14.30px;color:#b4bac6;transform:scaleX(1.0893);">Help</span>
<span class="t" id="m_l1" style="left:311.00px;top:91.80px;font-size:15.00px;color:#e8e8e6;font-family:'Liberation Mono', monospace;"><span style="color:#8cd63c">nikos@ubuntu</span>:~$ virt-manager</span>
<span class="t" id="m_l2" style="left:311.00px;top:108.60px;font-size:15.00px;color:#e8e8e6;font-family:'Liberation Mono', monospace;"><span style="color:#8cd63c">nikos@ubuntu</span>:~$ </span>
<div class="a" style="left:454px;top:108px;width:11px;height:18px;box-sizing:border-box;border:1px solid #e8e8e6"></div>

<svg class="a" style="left:955px;top:42px" width="85" height="20" viewBox="955 42 85 20">
 <rect x="962" y="51" width="6" height="2" fill="#6b707b"/>
 <path d="M993.8 49h4.2v4.2zM992 50.8v4.2h4.2z" fill="#6b707b"/>
 <circle cx="1025" cy="52" r="7" fill="#797e89"/>
 <path d="M1022.3 49.3l5.4 5.4M1027.7 49.3l-5.4 5.4" stroke="#2f343f" stroke-width="1.5"/>
</svg>
<div id="vmm" class="a" style="left:630px;top:93px;width:550px;height:576px;background:#fff;border-radius:3px 3px 0 0">
<div class="a" style="left:0;top:0;width:550px;height:55px;background:#2f343f;border-radius:3px 3px 0 0;box-shadow:inset 0 1px 0 rgba(255,255,255,.07),inset 1px 0 0 rgba(255,255,255,.04)"></div>
<div class="a" style="left:0;top:55px;width:550px;height:44px;background:#f5f6f7"></div>
<div class="a" style="left:0;top:122px;width:550px;height:27px;background:#5294e2"></div>
<div class="a" style="left:52px;top:66px;width:1px;height:23px;background:#dcdfe3"></div>
<div class="a" style="left:409px;top:104px;width:1px;height:13px;background:#dcdfe3"></div>
</div>
<span class="t" id="v_title" style="left:817.00px;top:96.45px;font-size:14.30px;color:#c9cdd6;transform:scaleX(1.1050);">Virtual Machine Manager</span>
<span class="t" id="v_m0" style="left:637.71px;top:123.55px;font-size:14.30px;color:#d3d7de;transform:scaleX(1.0905);">File</span>
<span class="t" id="v_m1" style="left:677.23px;top:123.55px;font-size:14.30px;color:#d3d7de;transform:scaleX(1.1667);">Edit</span>
<span class="t" id="v_m2" style="left:722.70px;top:123.55px;font-size:14.30px;color:#d3d7de;transform:scaleX(1.0613);">View</span>
<span class="t" id="v_m3" style="left:771.18px;top:123.55px;font-size:14.30px;color:#d3d7de;transform:scaleX(1.1179);">Help</span>
<span class="t" id="v_open" style="left:724.84px;top:160.09px;font-size:13.30px;color:#9b9ea7;transform:scaleX(1.1613);">Open</span>
<span class="t" id="v_name" style="left:635.35px;top:194.19px;font-size:13.30px;color:#7e838e;transform:scaleX(1.1471);">Name</span>
<span class="t" id="v_cpu" style="left:1045.52px;top:193.89px;font-size:13.30px;color:#7e838e;transform:scaleX(1.0818);">CPU usage</span>
<span class="t" id="v_qemu" style="left:652.28px;top:218.71px;font-size:11.80px;color:#ffffff;transform:scaleX(1.0238);">QEMU/KVM</span>

<svg class="a" style="left:630px;top:93px" width="550" height="100" viewBox="630 93 550 100">
 <defs>
  <linearGradient id="scr" x1="0" y1="0" x2="1" y2="1"><stop offset="0" stop-color="#2c3440"/><stop offset="1" stop-color="#5b6a7c"/></linearGradient>
  <radialGradient id="star" cx=".5" cy=".5" r=".5"><stop offset="0" stop-color="#fffbd0"/><stop offset=".5" stop-color="#e6e23c"/><stop offset="1" stop-color="#d6d62a" stop-opacity="0"/></radialGradient>
  <linearGradient id="scr2" x1="0" y1="0" x2="0" y2="1"><stop offset="0" stop-color="#a9adb4"/><stop offset="1" stop-color="#c9ccd1"/></linearGradient>
 </defs>
 <!-- window buttons -->
 <rect x="1096.8" y="105" width="6.4" height="2" fill="#b9bdc6"/>
 <path d="M1128.8 103h4.2v4.2zM1127 104.8v4.2h4.2z" fill="#a3a8b2"/>
 <circle cx="1160" cy="106" r="7.2" fill="#d95f6a"/>
 <path d="M1157.3 103.3l5.4 5.4M1162.7 103.3l-5.4 5.4" stroke="#2f343f" stroke-width="1.6"/>
 <!-- new vm -->
 <rect x="643.5" y="160.3" width="23" height="17" rx="1.5" fill="#e9eaec" stroke="#8e9298"/>
 <rect x="645.5" y="162.2" width="19" height="11.6" fill="url(#scr)"/>
 <path d="M653 165v7l5-3.5z" fill="#eef1f4"/>
 <rect x="650.5" y="178" width="9" height="1.5" fill="#7d8086"/>
 <rect x="648" y="179.4" width="14" height="1.7" rx=".8" fill="#5a5e64"/>
 <circle cx="661" cy="164.8" r="7.5" fill="url(#star)"/>
 <path d="M660.5 158.2l1.7 3.7 4 .400-3 2.7.900 3.9-3.6-2.1-3.6 2.1.900-3.9-3-2.7 4-.400z" fill="#fffde6"/>
 <!-- open monitor (disabled) -->
 <rect x="698.5" y="161.5" width="21" height="15" rx="1.5" fill="#eceded" stroke="#c2c4c8"/>
 <rect x="700.5" y="163.5" width="17" height="10.5" fill="url(#scr2)"/>
 <rect x="704" y="177.2" width="10" height="1.3" fill="#cfd1d4"/>
 <rect x="702.5" y="178.5" width="13" height="1.6" rx=".8" fill="#bfc1c5"/>
 <!-- play -->
 <path d="M791 159.3v21.6l20-10.8z" fill="#bac771"/>
 <!-- pause -->
 <rect x="833" y="160" width="9" height="20" fill="#86bbe3"/><rect x="844.2" y="160" width="8.8" height="20" fill="#86bbe3"/>
 <!-- power -->
 <circle cx="885" cy="169.8" r="9.5" fill="none" stroke="#ea8c8c" stroke-width="1.6"/>
 <circle cx="885" cy="169.8" r="6.9" fill="#ea8c8c"/>
 <rect x="884.2" y="162.5" width="1.6" height="7.5" fill="#fff"/>
 <!-- dropdown -->
 <path d="M918 168.2h9.8l-4.9 5z" fill="#9c9fa6"/>
 <!-- sort arrow -->
</svg>
<svg class="a" style="left:1018px;top:199px" width="14" height="9" viewBox="1018 199 14 9"><path d="M1020.2 201h9.7l-4.85 5.2z" fill="#8b8e96"/></svg>

<svg class="a" style="left:699px;top:323px;filter:drop-shadow(0 1px 1px rgba(0,0,0,.3))" width="20" height="26" viewBox="699 323 20 26">
 <path d="M702.5 326.5v17.2l3.9-3.4 2.7 5.7 2.6-1.2-2.7-5.6 5-.400z" fill="#000" stroke="#fff" stroke-width="1.2" stroke-linejoin="round"/>
</svg>
<svg class="a" style="left:380px;top:704px" width="610" height="64" viewBox="380 704 610 64">
<defs>
 <linearGradient id="d1" x1="0" y1="0" x2="0" y2="1"><stop offset="0" stop-color="#6a6a6a"/><stop offset="1" stop-color="#525252"/></linearGradient>
 <linearGradient id="d4" x1="0" y1="0" x2="0" y2="1"><stop offset="0" stop-color="#8573b8"/><stop offset="1" stop-color="#7262a6"/></linearGradient>
 <linearGradient id="d5" x1="0" y1="0" x2="0" y2="1"><stop offset="0" stop-color="#b273c2"/><stop offset="1" stop-color="#9e5eb0"/></linearGradient>
 <linearGradient id="d6" x1="0" y1="0" x2="0" y2="1"><stop offset="0" stop-color="#43adc5"/><stop offset="1" stop-color="#3596ae"/></linearGradient>
 <linearGradient id="d7" x1="0" y1="0" x2="0" y2="1"><stop offset="0" stop-color="#9652b0"/><stop offset="1" stop-color="#86429e"/></linearGradient>
 <linearGradient id="bar" x1="0" y1="0" x2="0" y2="1"><stop offset="0" stop-color="#5a5a5a"/><stop offset="1" stop-color="#3c3c3c"/></linearGradient>
 <linearGradient id="bar2" x1="0" y1="0" x2="0" y2="1"><stop offset="0" stop-color="#b4b4b4"/><stop offset="1" stop-color="#8c8c8c"/></linearGradient>
 <radialGradient id="glow" cx=".5" cy=".5" r=".5"><stop offset="0" stop-color="#bcd8ff"/><stop offset=".35" stop-color="#5a9cf5" stop-opacity=".8"/><stop offset="1" stop-color="#3a7be0" stop-opacity="0"/></radialGradient>
 <clipPath id="c2"><circle cx="473" cy="732" r="23"/></clipPath>
 <filter id="sh" x="-20%" y="-20%" width="140%" height="150%"><feGaussianBlur stdDeviation="1.2"/></filter>
</defs>
<circle cx="413" cy="733.5" r="23.5" fill="#000" opacity=".45" filter="url(#sh)"/>
<circle cx="473" cy="733.5" r="23.5" fill="#000" opacity=".45" filter="url(#sh)"/>
<circle cx="533" cy="733.5" r="23.5" fill="#000" opacity=".45" filter="url(#sh)"/>
<circle cx="593" cy="733.5" r="23.5" fill="#000" opacity=".45" filter="url(#sh)"/>
<circle cx="653" cy="733.5" r="23.5" fill="#000" opacity=".45" filter="url(#sh)"/>
<circle cx="713" cy="733.5" r="23.5" fill="#000" opacity=".45" filter="url(#sh)"/>
<circle cx="773" cy="733.5" r="23.5" fill="#000" opacity=".45" filter="url(#sh)"/>
<circle cx="833" cy="733.5" r="23.5" fill="#000" opacity=".45" filter="url(#sh)"/>
<circle cx="893" cy="733.5" r="23.5" fill="#000" opacity=".45" filter="url(#sh)"/>
<circle cx="953" cy="733.5" r="23.5" fill="#000" opacity=".45" filter="url(#sh)"/>
<circle cx="413" cy="732" r="23" fill="url(#d1)"/>
<path d="M402.3 724l8.8 6-8.8 6" fill="none" stroke="#e8e8e8" stroke-width="3.2"/>
<rect x="413" y="738.2" width="12" height="3.6" fill="#e8e8e8"/>
<g clip-path="url(#c2)"><rect x="450" y="709" width="46" height="46" fill="#6fa5d9"/>
<path d="M473 732L438 708.7V700H500V727.2H473z" fill="#6696c9"/>
<path d="M473 727.2H500V760H466z" fill="#95bfe7"/>
<path d="M473 732l8-4.8H473z" fill="#95bfe7"/></g>
<circle cx="473" cy="732" r="8.4" fill="#4a90e2" stroke="#fff" stroke-width="1.7"/>
<circle cx="533" cy="732" r="23" fill="#fddaa9"/>
<path d="M521 731l11.5-9 12.5 9v13.5h-24z" fill="#ea4b53"/>
<path d="M522.8 723.4h20.2v9.4l-10.1 4-10.1-4z" fill="#f3f4f6"/>
<path d="M532.6 722l2 1.6h-4z" fill="#ea4b53"/>
<path d="M544 717.3c-5 1.2-9.5 6-11.5 11.5-.8 2.2-1.5 3.7-2 4.8l.9.3c.6-1.3 1.4-2.6 2.6-3.5 4.5-3 8.2-7.5 10-13.1z" fill="#2b97ca"/>
<circle cx="593" cy="732" r="23" fill="url(#d4)"/>
<path d="M580.8 724.2q0-1.4 1.4-1.4h9.8q1.4 0 1.4 1.4v3h-12.6z" fill="#f6a21f"/>
<rect x="580.8" y="725" width="24.4" height="15.8" rx="1.2" fill="#fdc530"/>
<rect x="580.8" y="725" width="12.6" height="1" fill="#ffe9a6"/>
<circle cx="653" cy="732" r="23" fill="url(#d5)"/>
<path d="M642.7 718.8h14.8l5.7 5.7v20h-20.5z" fill="#efefe9"/>
<path d="M657.5 718.8v5.7h5.7z" fill="#cfcfc6"/>
<rect x="645" y="722.8" width="9.5" height="1.9" fill="#7b7373"/>
<rect x="645" y="727" width="6.6" height="1.9" fill="#7b7373"/>
<rect x="645" y="731" width="11.5" height="1.9" fill="#7b7373"/>
<rect x="645" y="735.2" width="8.5" height="1.9" fill="#7b7373"/>
<rect x="645" y="739.8" width="14.4" height="1.9" fill="#7b7373"/>
<circle cx="713" cy="732" r="23" fill="url(#d6)"/>
<path d="M702 719.8q0-1 1-1h17l5.7 5.7v19q0 1-1 1h-21.7q-1 0-1-1z" fill="#f3f8fd"/>
<path d="M720 718.8v5.7h5.7z" fill="#c4cdd6"/>
<rect x="705" y="721.8" width="16" height="1.9" fill="#4a8fe0"/>
<rect x="705" y="728" width="16" height="1.9" fill="#4a8fe0"/>
<rect x="705" y="734" width="16" height="1.9" fill="#4a8fe0"/>
<rect x="705" y="739.8" width="16" height="1.9" fill="#4a8fe0"/>
<circle cx="773" cy="732" r="23" fill="url(#d7)"/>
<path d="M767.7 722.1v19.8l15.1-9.9z" fill="#fff"/>
<circle cx="833" cy="732" r="23" fill="#f6954b"/>
<path d="M824.3 724c1.5 2.5 4 4.2 7.5 4.5 4.5.4 9-1.3 12.2-5-.3 4.5-1.5 8.5-3.5 11.5-2.5 3.8-7 5.6-12 5-4.5-.5-8.5-2.2-9.5-5-.6-1.7.5-3.5 2.8-4.8 1.7-1 2.8-3 2.5-6.2z" fill="#a9753e"/>
<path d="M824 738.5c3 1.5 7 1.8 10.5.5" fill="none" stroke="#6e4a22" stroke-width="1"/>
<ellipse cx="821.5" cy="734.8" rx="2.5" ry="2.9" fill="#1d1a18" transform="rotate(-20 821.5 734.8)"/>
<circle cx="826.3" cy="733" r="2.3" fill="#fff"/><circle cx="830.8" cy="733.6" r="2.7" fill="#fff"/>
<circle cx="826.8" cy="733.2" r="1" fill="#222"/><circle cx="831.3" cy="733.8" r="1.1" fill="#222"/>
<path d="M835.5 739.3l5.5-.8" stroke="#cfc8c0" stroke-width="1.5"/><path d="M841 738.5l5-.3" stroke="#d6262c" stroke-width="1.7" stroke-linecap="round"/>
<circle cx="893" cy="732" r="23" fill="#e6e3d8"/>
<rect x="880" y="718" width="26.1" height="12" rx="6" fill="#49b860"/>
<circle cx="885.9" cy="724" r="4.6" fill="#f1f7f0"/>
<path d="M883.9 724.1l1.5 1.5 2.7-3" fill="none" stroke="#3b9aa0" stroke-width=".9"/>
<rect x="880" y="734" width="26.1" height="12" rx="6" fill="#f0544b"/>
<circle cx="900.2" cy="740" r="4.6" fill="#fbeeee"/>
<path d="M898.7 738.5l3 3m0-3l-3 3" fill="none" stroke="#e8504a" stroke-width=".9"/>
<circle cx="953" cy="732" r="23" fill="#e9e9e9"/>
<path d="M948.6 736.5l4.3-9.3 3.5 9.3 3.9-9.3 4.2 9.3" fill="none" stroke="#3b4149" stroke-width="1.8" stroke-linejoin="miter"/>
<path d="M941.5 727.2l4.4 9.3 4-9.3" fill="none" stroke="#3b4149" stroke-width="1.8"/>
<path d="M941.5 727.2l4.4 9.3" fill="none" stroke="#7a1d4a" stroke-width="2"/>
<path d="M382 768v-7q0-2 2-2h598q2 0 2 2v7z" fill="url(#bar)"/>
<path d="M923 759h59q2 0 2 2v7h-61z" fill="url(#bar2)"/>
<path d="M382.5 768v-7q0-1.5 1.5-1.5h598q1.5 0 1.5 1.5v7" fill="none" stroke="#b9b9b9" stroke-width="1"/>
<circle cx="412.5" cy="767" r="4.5" fill="url(#glow)" opacity=".8"/><circle cx="953" cy="767" r="4.5" fill="url(#glow)" opacity=".8"/>
<rect x="411.9" y="765" width="1.4" height="3" fill="#a8cbff"/><rect x="952.3" y="765" width="1.4" height="3" fill="#a8cbff"/>
</svg>
</body></html>
